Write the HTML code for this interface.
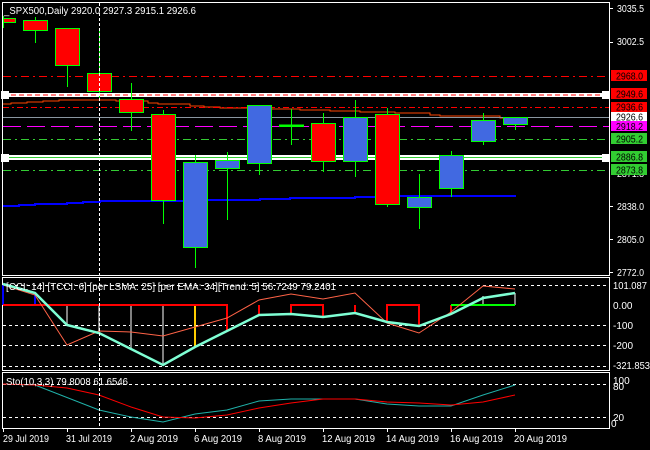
<!DOCTYPE html><html><head><style>body{margin:0;background:#000}svg{display:block}text{font-family:"Liberation Sans",sans-serif;font-size:10px}</style></head><body>
<svg width="650" height="450" viewBox="0 0 650 450" xmlns="http://www.w3.org/2000/svg">
<rect width="650" height="450" fill="#000"/>
<rect x="2.5" y="2.5" width="607" height="273" fill="none" stroke="#fff"/>
<rect x="2.5" y="277.5" width="607" height="93" fill="none" stroke="#fff"/>
<rect x="2.5" y="372.5" width="607" height="56" fill="none" stroke="#fff"/>
<line x1="3" y1="76.5" x2="609" y2="76.5" stroke="#f00" stroke-dasharray="8,4,2,4"/>
<rect x="3" y="93" width="606" height="4" fill="#fff"/>
<line x1="3" y1="95" x2="609" y2="95" stroke="#f00" stroke-dasharray="5,3"/>
<polyline fill="none" stroke="#ff4500" points="3,104 11,104 11,103 27,103 27,102 43,102 43,101 59,101 59,100 116,100 116,101 148,101 148,103 158,103 158,104 190,104 190,106 204,106 204,107 220,107 220,108 260,108 260,109 300,109 300,110 330,110 330,111 360,111 360,112 395,112 395,113 430,113 430,115 440,115 440,116 500,116 500,118 525,118"/>
<line x1="3" y1="107.5" x2="609" y2="107.5" stroke="#f00" stroke-dasharray="6,3,2,3"/>
<line x1="3" y1="117.5" x2="609" y2="117.5" stroke="#8a97a0"/>
<line x1="3" y1="126.5" x2="609" y2="126.5" stroke="#f0f" stroke-dasharray="18,6"/>
<line x1="3" y1="139.5" x2="609" y2="139.5" stroke="#3c3" stroke-dasharray="8,4,2,4"/>
<rect x="3" y="155" width="606" height="5" fill="#fff"/>
<line x1="3" y1="157.5" x2="609" y2="157.5" stroke="#3c3"/>
<line x1="3" y1="170.5" x2="609" y2="170.5" stroke="#3c3" stroke-dasharray="8,4,2,4"/>
<rect x="1" y="91" width="8" height="8" fill="#fff"/><rect x="1" y="154" width="8" height="8" fill="#fff"/>
<rect x="602" y="91" width="8" height="8" fill="#fff"/><rect x="602" y="154" width="8" height="8" fill="#fff"/>
<polyline fill="none" stroke="#00f" stroke-width="2" points="3,206 19,206 19,205 35,205 35,204 67,204 67,203 83,203 83,202 100,202 100,201 190,201 190,200 260,200 260,199 290,199 290,198 355,198 355,197 390,197 390,196 516,196"/>
<g stroke="#0f0" stroke-width="1">
<line x1="35.5" y1="17" x2="35.5" y2="43"/><line x1="67.5" y1="28" x2="67.5" y2="87"/><line x1="99.5" y1="30" x2="99.5" y2="100"/><line x1="131.5" y1="83" x2="131.5" y2="131"/><line x1="163.5" y1="110" x2="163.5" y2="224"/><line x1="195.5" y1="155" x2="195.5" y2="268"/><line x1="227.5" y1="152" x2="227.5" y2="220"/><line x1="259.5" y1="105" x2="259.5" y2="175"/><line x1="291.5" y1="109" x2="291.5" y2="145"/><line x1="323.5" y1="113" x2="323.5" y2="172"/><line x1="355.5" y1="100" x2="355.5" y2="177"/><line x1="387.5" y1="108" x2="387.5" y2="207"/><line x1="419.5" y1="174" x2="419.5" y2="229"/><line x1="451.5" y1="151" x2="451.5" y2="197"/><line x1="483.5" y1="113" x2="483.5" y2="145"/><line x1="515.5" y1="117" x2="515.5" y2="130"/><line x1="3.5" y1="16" x2="3.5" y2="28"/>
<rect x="3.5" y="18.5" width="12" height="4" fill="#f00"/>
<rect x="23.5" y="20.5" width="24" height="10" fill="#f00"/>
<rect x="55.5" y="28.5" width="24" height="37" fill="#f00"/>
<rect x="87.5" y="73.5" width="24" height="18" fill="#f00"/>
<rect x="119.5" y="99.5" width="24" height="13" fill="#f00"/>
<rect x="151.5" y="114.5" width="24" height="86" fill="#f00"/>
<rect x="183.5" y="162.5" width="24" height="85" fill="#4169e1"/>
<rect x="215.5" y="160.5" width="24" height="8" fill="#4169e1"/>
<rect x="247.5" y="105.5" width="24" height="58" fill="#4169e1"/>
<rect x="279.5" y="125" width="24" height="1.5" fill="#0f0"/>
<rect x="311.5" y="123.5" width="24" height="38" fill="#f00"/>
<rect x="343.5" y="117.5" width="24" height="44" fill="#4169e1"/>
<rect x="375.5" y="114.5" width="24" height="90" fill="#f00"/>
<rect x="407.5" y="197.5" width="24" height="10" fill="#4169e1"/>
<rect x="439.5" y="155.5" width="24" height="33" fill="#4169e1"/>
<rect x="471.5" y="120.5" width="24" height="21" fill="#4169e1"/>
<rect x="503.5" y="117.5" width="24" height="7" fill="#4169e1"/>
</g>
<text x="4" y="14" fill="#fff" textLength="192" lengthAdjust="spacingAndGlyphs">_SPX500,Daily  2920.0 2927.3 2915.1 2926.6</text>
<g fill="#fff"><text x="617" y="12" textLength="27" lengthAdjust="spacingAndGlyphs">3035.5</text><text x="617" y="45" textLength="27" lengthAdjust="spacingAndGlyphs">3002.5</text><text x="617" y="210" textLength="27" lengthAdjust="spacingAndGlyphs">2838.0</text><text x="617" y="243" textLength="27" lengthAdjust="spacingAndGlyphs">2805.0</text><text x="617" y="276" textLength="27" lengthAdjust="spacingAndGlyphs">2772.0</text><text x="617" y="177" textLength="27" lengthAdjust="spacingAndGlyphs">2871.8</text></g>
<g stroke="#fff"><line x1="609" y1="8.5" x2="613" y2="8.5"/><line x1="609" y1="42.5" x2="613" y2="42.5"/><line x1="609" y1="206.5" x2="613" y2="206.5"/><line x1="609" y1="239.5" x2="613" y2="239.5"/><line x1="609" y1="272.5" x2="613" y2="272.5"/></g>
<rect x="611" y="70" width="36" height="11" fill="#f00"/><text x="616" y="79.5" fill="#000" textLength="27" lengthAdjust="spacingAndGlyphs">2968.0</text>
<rect x="611" y="88" width="36" height="11" fill="#f00"/><text x="616" y="97.5" fill="#000" textLength="27" lengthAdjust="spacingAndGlyphs">2949.6</text>
<rect x="611" y="102" width="36" height="10" fill="#f00"/><text x="616" y="110.5" fill="#000" textLength="27" lengthAdjust="spacingAndGlyphs">2936.6</text>
<rect x="611" y="112" width="36" height="9" fill="#fff"/><text x="616" y="120.5" fill="#000" textLength="27" lengthAdjust="spacingAndGlyphs">2926.6</text>
<rect x="611" y="121" width="36" height="10" fill="#f0f"/><text x="616" y="130" fill="#000" textLength="27" lengthAdjust="spacingAndGlyphs">2918.2</text>
<rect x="611" y="133" width="36" height="11" fill="#32cd32"/><text x="616" y="142.5" fill="#000" textLength="27" lengthAdjust="spacingAndGlyphs">2905.2</text>
<rect x="611" y="151" width="36" height="11" fill="#32cd32"/><text x="616" y="160.5" fill="#000" textLength="27" lengthAdjust="spacingAndGlyphs">2886.8</text>
<rect x="611" y="164" width="36" height="11" fill="#32cd32"/><text x="616" y="173.5" fill="#000" textLength="27" lengthAdjust="spacingAndGlyphs">2873.8</text>
<g stroke="#fff" stroke-dasharray="3,3"><line x1="3" y1="285.5" x2="609" y2="285.5"/><line x1="3" y1="325.5" x2="609" y2="325.5"/><line x1="3" y1="345.5" x2="609" y2="345.5"/><line x1="3" y1="366.5" x2="609" y2="366.5"/><line x1="3" y1="384.5" x2="609" y2="384.5"/><line x1="3" y1="417.5" x2="609" y2="417.5"/></g>
<g stroke-width="2">
<line x1="3" y1="285" x2="3" y2="305" stroke="#00f"/><line x1="35" y1="293" x2="35" y2="305" stroke="#00f"/>
<g stroke="#808080"><line x1="67" y1="305" x2="67" y2="325"/><line x1="99" y1="305" x2="99" y2="333"/><line x1="131" y1="305" x2="131" y2="348"/><line x1="163" y1="305" x2="163" y2="365"/><line x1="483" y1="296" x2="483" y2="305"/><line x1="515" y1="293" x2="515" y2="305"/></g>
<line x1="195" y1="305" x2="195" y2="347" stroke="#fc0"/>
<polyline fill="none" stroke="#f00" points="3,305 227,305 227,330"/>
<line x1="259" y1="305" x2="259" y2="315" stroke="#f00"/>
<polyline fill="none" stroke="#f00" points="291,315 291,305 323,305 323,317"/>
<line x1="355" y1="305" x2="355" y2="313" stroke="#f00"/>
<polyline fill="none" stroke="#f00" points="387,322 387,305 419,305 419,326"/>
<line x1="451" y1="305" x2="451" y2="314" stroke="#f00"/>
<line x1="451" y1="305" x2="515" y2="305" stroke="#0f0"/>
</g>
<polyline fill="none" stroke="#ff6347" stroke-width="1" points="3,285 35,295 67,345 99,331 131,332 163,336 195,327 227,318 259,300 291,294 323,299 355,293 387,323 419,333 451,312 483,286 515,289"/>
<polyline fill="none" stroke="#7fffd4" stroke-width="2.5" points="3,284 35,293 67,325 99,333 163,365 195,347 259,315 291,314 323,317 355,313 387,322 419,326 451,314 483,298 515,293"/>
<text x="6" y="290" fill="#fff" textLength="330" lengthAdjust="spacingAndGlyphs">[CCI: 14] [TCCI: 6] [per LSMA: 25] [per EMA: 34][Trend: 5]  56.7249 79.2401</text>
<g fill="#fff"><text x="613" y="289" textLength="34" lengthAdjust="spacingAndGlyphs">101.087</text><text x="613" y="309">0.00</text><text x="613" y="329">-100</text><text x="613" y="349">-200</text><text x="613" y="369" textLength="37" lengthAdjust="spacingAndGlyphs">-321.853</text><text x="613" y="384">100</text><text x="613" y="390">80</text><text x="613" y="421">20</text><text x="611" y="427">0</text></g>
<polyline fill="none" stroke="#20b2aa" points="3,384 35,385 99,410 131,417 163,422 195,414 227,410 259,401 291,399 323,399 355,399 387,404 419,406 451,406 483,395 515,385"/>
<polyline fill="none" stroke="#f00" points="3,384 35,385 67,388 99,395 131,407 163,417 195,418 227,415 259,408 291,403 323,399 355,399 387,402 419,403 451,405 483,402 515,395"/>
<text x="6" y="385" fill="#fff" textLength="122" lengthAdjust="spacingAndGlyphs">Sto(10,3,3) 79.8008 61.6546</text>
<line x1="99.5" y1="3" x2="99.5" y2="428" stroke="#fff" stroke-dasharray="3,2"/>
<g stroke="#fff"><line x1="3.5" y1="428" x2="3.5" y2="432"/><line x1="67.5" y1="428" x2="67.5" y2="432"/><line x1="131.5" y1="428" x2="131.5" y2="432"/><line x1="195.5" y1="428" x2="195.5" y2="432"/><line x1="259.5" y1="428" x2="259.5" y2="432"/><line x1="323.5" y1="428" x2="323.5" y2="432"/><line x1="387.5" y1="428" x2="387.5" y2="432"/><line x1="451.5" y1="428" x2="451.5" y2="432"/><line x1="515.5" y1="428" x2="515.5" y2="432"/></g>
<g fill="#fff"><text x="3" y="442" textLength="46" lengthAdjust="spacingAndGlyphs">29 Jul 2019</text><text x="66" y="442" textLength="46" lengthAdjust="spacingAndGlyphs">31 Jul 2019</text><text x="130" y="442" textLength="48" lengthAdjust="spacingAndGlyphs">2 Aug 2019</text><text x="194" y="442" textLength="48" lengthAdjust="spacingAndGlyphs">6 Aug 2019</text><text x="258" y="442" textLength="48" lengthAdjust="spacingAndGlyphs">8 Aug 2019</text><text x="322" y="442" textLength="53" lengthAdjust="spacingAndGlyphs">12 Aug 2019</text><text x="386" y="442" textLength="53" lengthAdjust="spacingAndGlyphs">14 Aug 2019</text><text x="450" y="442" textLength="53" lengthAdjust="spacingAndGlyphs">16 Aug 2019</text><text x="514" y="442" textLength="53" lengthAdjust="spacingAndGlyphs">20 Aug 2019</text></g>
</svg>
</body></html>
